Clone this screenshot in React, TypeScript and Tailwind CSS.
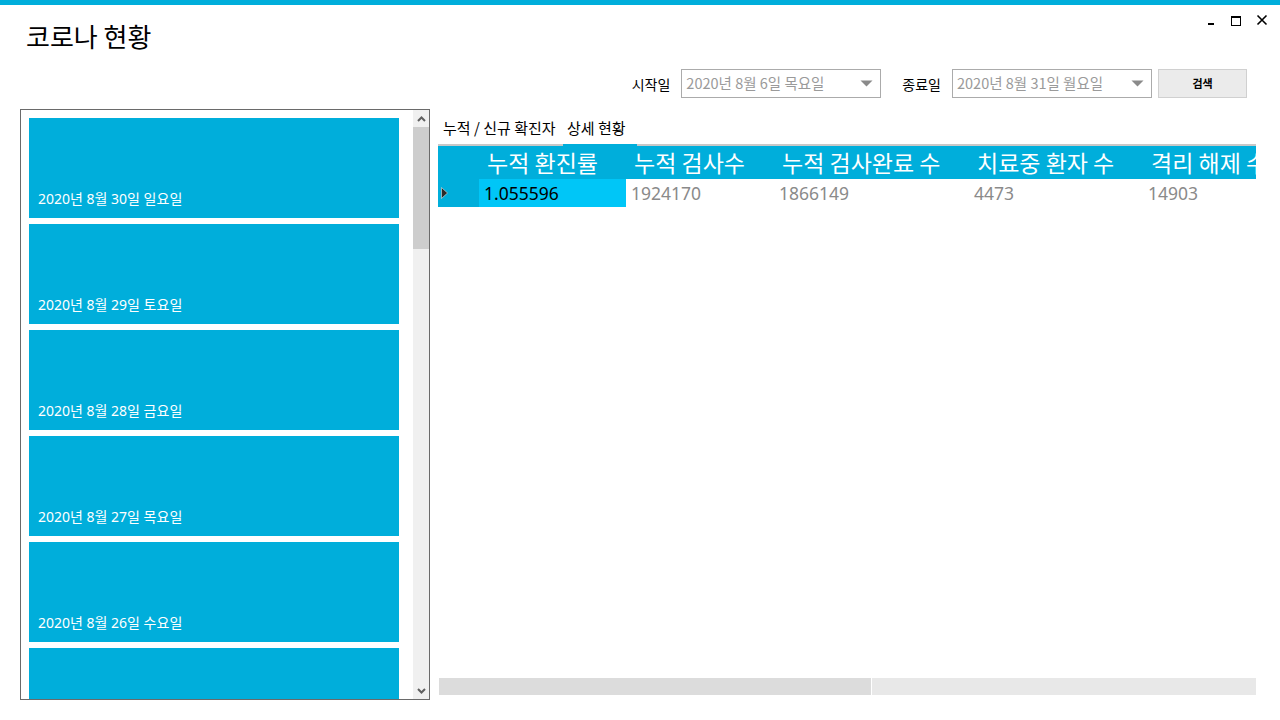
import React from "react";

const CYAN = "bg-[#00AEDB]";

// last card is only partly visible, its date label sits below the fold
const days = [
  "2020년 8월 30일 일요일",
  "2020년 8월 29일 토요일",
  "2020년 8월 28일 금요일",
  "2020년 8월 27일 목요일",
  "2020년 8월 26일 수요일",
  "",
];

const columns = [
  { title: "누적 환진률", value: "1.055596", w: "w-[147px]" },
  { title: "누적 검사수", value: "1924170", w: "w-[148px]" },
  { title: "누적 검사완료 수", value: "1866149", w: "w-[195px]" },
  { title: "치료중 환자 수", value: "4473", w: "w-[174px]" },
  { title: "격리 해제 수", value: "14903", w: "w-[160px]" },
];

function WindowControls() {
  return (
    <div className="flex items-start gap-[14px] pt-[5px] pr-[12px]">
      <svg width="10" height="16" viewBox="0 0 10 16">
        <rect x="2" y="13" width="6" height="2" fill="#000" />
      </svg>
      <svg width="12" height="16" viewBox="0 0 12 16">
        <rect x="1.5" y="6.5" width="9" height="9" fill="none" stroke="#000" strokeWidth="1" />
        <rect x="1" y="6" width="10" height="2" fill="#000" />
      </svg>
      <svg width="12" height="16" viewBox="0 0 12 16">
        <path d="M1.5 5.5 L10.5 14.5 M10.5 5.5 L1.5 14.5" stroke="#000" strokeWidth="1.6" />
      </svg>
    </div>
  );
}

function DateCombo({ text }: { text: string }) {
  return (
    <div className="flex h-[29px] w-[200px] items-center justify-between border border-[#ababab] bg-white pl-[4px] pr-[7px]">
      <span className="text-[14.5px] leading-none text-[#9a9a9a]">{text}</span>
      <svg width="13" height="7" viewBox="0 0 13 7">
        <polygon points="0.5,0.5 12.5,0.5 6.5,6.5" fill="#8a8a8a" />
      </svg>
    </div>
  );
}

function Chevron({ up }: { up?: boolean }) {
  return (
    <svg width="9" height="6" viewBox="0 0 9 6">
      <path
        d={up ? "M1 5 L4.5 1.5 L8 5" : "M1 1 L4.5 4.5 L8 1"}
        fill="none"
        stroke="#606060"
        strokeWidth="2"
      />
    </svg>
  );
}

export default function App() {
  return (
    <div className="flex h-[720px] w-[1280px] flex-col overflow-hidden bg-white font-['Noto_Sans','Noto_Sans_CJK_KR',sans-serif] text-black">
      <div className={`h-[5px] ${CYAN}`} />

      <div className="flex h-[64px] items-start justify-between">
        <div className="pl-[26px] pt-[15px] font-['Noto_Sans_CJK_KR',sans-serif] text-[26px] leading-[32px]">
          코로나 현황
        </div>
        <WindowControls />
      </div>

      <div className="flex h-[29px] items-center justify-end pr-[33px] font-['Noto_Sans_CJK_KR',sans-serif]">
        <span className="mr-[11px] text-[14px] leading-none">시작일</span>
        <DateCombo text="2020년 8월 6일 목요일" />
        <span className="ml-[21px] mr-[11px] text-[14px] leading-none">종료일</span>
        <DateCombo text="2020년 8월 31일 월요일" />
        <button className="ml-[6px] flex h-[29px] w-[89px] items-center justify-center border border-[#d0d0d0] bg-[#ebebeb] text-[11px] font-bold">
          검색
        </button>
      </div>

      <div className="mt-[11px] flex h-[591px] pl-[20px]">
        {/* date list */}
        <div className="flex h-[591px] w-[410px] border border-[#6a6a6a]">
          <div className="flex w-[392px] flex-col gap-[6px] overflow-hidden pl-[8px] pt-[8px]">
            {days.map((d, i) => (
              <div key={i} className={`flex h-[100px] w-[370px] shrink-0 items-end pb-[10px] pl-[9px] ${CYAN}`}>
                <span className="text-[14px] leading-[18px] text-white">{d}</span>
              </div>
            ))}
          </div>
          <div className="flex w-[16px] flex-col bg-[#f0f0f0]">
            <div className="flex h-[17px] items-center justify-center">
              <Chevron up />
            </div>
            <div className="h-[122px] bg-[#cdcdcd]" />
            <div className="flex-1" />
            <div className="flex h-[17px] items-center justify-center">
              <Chevron />
            </div>
          </div>
        </div>

        {/* tabs + grid */}
        <div className="ml-[8px] flex w-[818px] flex-col">
          <div className="flex h-[35px] items-center pt-[1px] font-['Noto_Sans_CJK_KR',sans-serif] text-[15px] leading-none">
            <span className="w-[125px] pl-[5px]">누적 / 신규 확진자</span>
            <span className="pl-[4px]">상세 현황</span>
          </div>
          <div className="flex h-[2px] bg-[#c8c8c8]">
            <div className={`ml-[125px] w-[74px] ${CYAN}`} />
          </div>
          <div className="flex h-[551px] flex-col">
            <div className={`flex h-[33px] items-center overflow-hidden whitespace-nowrap ${CYAN}`}>
              <div className="w-[41px] shrink-0" />
              {columns.map((c) => (
                <div
                  key={c.title}
                  className={`${c.w} shrink-0 pl-[8px] font-['Noto_Sans_CJK_KR',sans-serif] text-[23px] leading-none text-white`}
                >
                  {c.title}
                </div>
              ))}
            </div>
            <div className="flex h-[28px] items-center overflow-hidden whitespace-nowrap">
              <div className={`flex h-[28px] w-[41px] shrink-0 items-center pl-[3px] ${CYAN}`}>
                <svg width="7" height="12" viewBox="0 0 7 12">
                  <polygon points="0.5,0.5 6.5,6 0.5,11.5" fill="#2b2b2b" stroke="#e6e6e6" strokeWidth="0.6" />
                </svg>
              </div>
              {columns.map((c, i) => (
                <div
                  key={c.value}
                  className={`${c.w} flex h-[28px] shrink-0 items-center pl-[5px] pt-[1px] text-[17.5px] leading-none ${
                    i === 0 ? "bg-[#00C6F7] text-black" : "text-[#8a8a8a]"
                  }`}
                >
                  {c.value}
                </div>
              ))}
            </div>
            <div className="flex-1" />
            <div className="mb-[2px] ml-[1px] flex h-[17px]">
              <div className="w-[432px] bg-[#dcdcdc]" />
              <div className="w-[1px] bg-white" />
              <div className="flex-1 bg-[#e8e8e8]" />
            </div>
          </div>
        </div>
      </div>
    </div>
  );
}
